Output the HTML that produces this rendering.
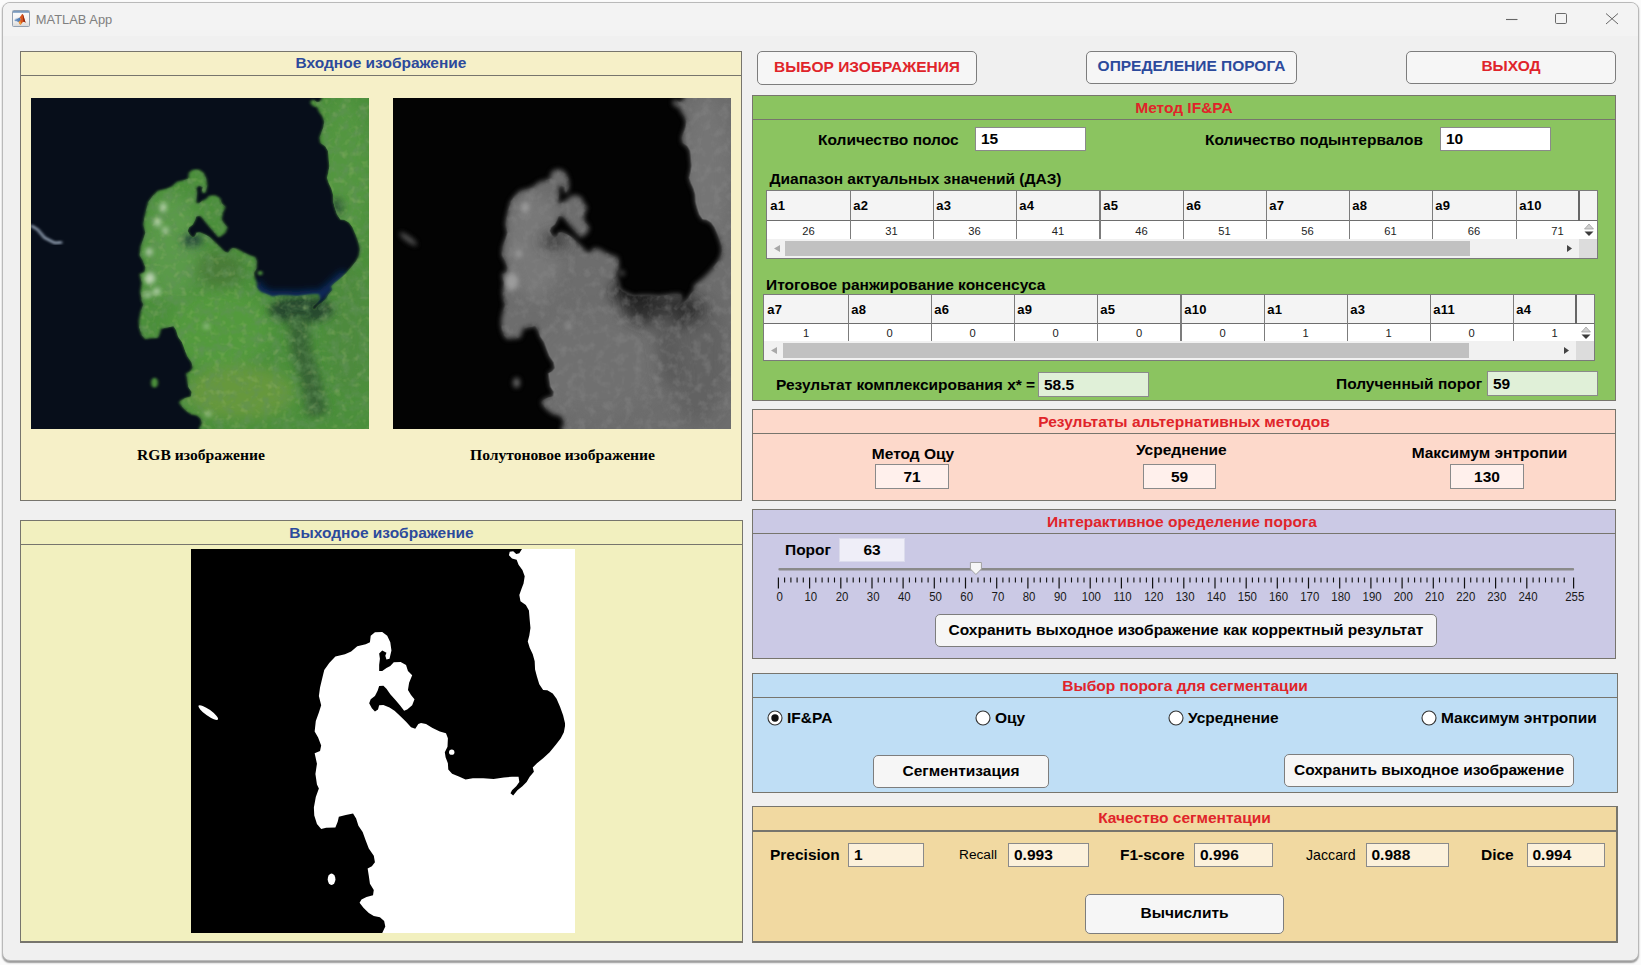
<!DOCTYPE html>
<html lang="ru"><head><meta charset="utf-8"><title>MATLAB App</title>
<style>
*{box-sizing:border-box}
html,body{margin:0;padding:0}
body{width:1641px;height:965px;position:relative;overflow:hidden;background:#fbfbfb;font-family:"Liberation Sans",sans-serif;font-size:15.5px;color:#000}
.abs{position:absolute}
#win{position:absolute;left:2px;top:2px;width:1637px;height:959px;background:#f0f0f0;border:1px solid #b9b9b9;border-radius:8px;box-shadow:0 1.5px 1.5px #9c9c9c}
#tb{position:absolute;left:3px;top:3px;width:1635px;height:33px;background:#f3f3f3;border-radius:7px 7px 0 0}
.panel{position:absolute;border:1px solid #77756d}
.pt{position:absolute;left:0;right:0;top:0;text-align:center;font-weight:bold;white-space:nowrap;border-bottom:1px solid #77756d}
.t{position:absolute;white-space:nowrap;font-weight:bold;line-height:18px}
.n{font-weight:normal}
.btn{position:absolute;border:1px solid #7d7d7d;border-radius:5px;background:#f6f6f6;text-align:center;font-weight:bold;white-space:nowrap}
.ed{position:absolute;border:1px solid #8a8a8a;background:#fff;font-weight:bold;white-space:nowrap;padding-left:6px}
.red{color:#e0242a}.blue{color:#2c4a9c}
</style></head>
<body>
<div id="win"></div><div id="tb"></div>
<svg class="abs" style="left:12px;top:10px" width="18" height="17" viewBox="0 0 18 17">
<defs><linearGradient id="ig" x1="0" y1="0" x2="0" y2="1"><stop offset="0" stop-color="#fdfdfd"/><stop offset=".6" stop-color="#f4f4f4"/><stop offset="1" stop-color="#d8d8d8"/></linearGradient></defs>
<rect x="0.5" y="0.5" width="17" height="16" rx="1" fill="url(#ig)" stroke="#93a0b0"/>
<rect x="1" y="1" width="16" height="1.8" fill="#7b9bbf"/>
<path d="M2.2 10.3 L5.2 8.9 L7.6 7.4 L9 9.6 L6.6 12 Z" fill="#4a78b0"/>
<path d="M2.6 9.6 L6.4 8 M3 11 L6.8 9.8" stroke="#86a8d0" stroke-width=".6"/>
<path d="M6.6 12 L9 9.6 L7.6 7.4 L9.3 5.2 Q10 3.9 10.6 4.1 Q11.2 4.4 12 7.5 L13.6 12.8 Q12.2 11.4 11 12 Q9.8 12.8 9 14.4 Q8.4 14.8 7.8 14.2 Z" fill="#d8561f"/>
<path d="M10.6 4.1 Q11.2 4.4 12 7.5 L13.6 12.8 Q12.4 11.6 11.4 11.9 Q11.3 7 10.6 4.1Z" fill="#8e2712"/>
<path d="M6.6 12 L8.2 11 L9.4 13.6 Q8.6 14.9 7.8 14.2 Z" fill="#f0a63a"/>
</svg>
<div class="abs" style="left:35.8px;top:10.5px;font-size:12.9px;line-height:18px;color:#808080;white-space:nowrap">MATLAB App</div>
<svg class="abs" style="left:1500px;top:8px" width="125" height="22" viewBox="0 0 125 22">
<path d="M6 11.5 H17.5" stroke="#666" stroke-width="1.1" fill="none"/>
<rect x="55.5" y="5.5" width="11" height="10" rx="1.2" fill="none" stroke="#6a6a6a" stroke-width="1"/>
<path d="M106 5.5 L118 16 M118 5.5 L106 16" stroke="#666" stroke-width="1" fill="none"/>
</svg>
<div class="panel" style="left:20px;top:51px;width:722px;height:450px;background:#f6f0c8;"><div class="pt blue" style="height:24px;line-height:22px;">Входное изображение</div></div>
<div class="panel" style="left:20px;top:520px;width:723px;height:423px;background:#f2f0bf;border-bottom-width:2px;"><div class="pt blue" style="height:24px;line-height:23px;">Выходное изображение</div></div>
<svg width="0" height="0" style="position:absolute"><defs><g id="land"><polygon points="862,0 855,11 847,13 839,6 830,7 828,16 836,25 848,28 853,41 863,55 869,71 866,90 861,103 855,120 858,136 872,146 880,160 882,184 884,206 881,225 877,241 882,257 890,274 895,292 896,314 901,333 907,352 917,367 928,368 942,376 952,390 961,411 969,433 974,454 974,461 971,477 963,493 950,510 934,529 917,545 901,558 890,569 893,580 882,593 874,607 863,618 850,628 839,642 832,636 836,628 847,618 855,607 853,593 836,593 815,595 788,599 761,597 734,597 715,600 699,593 680,585 670,574 669,558 663,542 661,529 668,515 669,493 664,480 648,475 629,466 612,456 599,453 592,456 584,468 573,464 560,450 544,434 530,421 517,413 501,406 490,407 487,418 479,423 471,415 464,402 468,391 479,383 486,369 490,357 501,356 509,364 519,378 533,394 544,407 555,421 563,418 576,407 582,391 573,380 565,367 568,348 576,329 565,318 560,302 546,294 528,295 519,305 509,310 498,318 490,318 490,302 492,286 490,272 498,264 509,270 506,278 509,288 517,286 522,264 519,243 511,226 498,216 479,217 468,226 466,243 455,248 433,253 417,267 401,274 376,280 360,297 347,315 341,340 336,361 333,383 339,407 333,426 325,448 322,475 331,491 339,512 336,526 322,532 328,559 324,586 328,613 333,624 325,646 320,673 321,694 328,716 339,729 352,726 376,725 382,710 385,697 403,693 422,689 430,702 436,721 447,737 455,759 463,780 476,799 479,816 471,826 460,832 463,851 466,872 476,888 474,902 457,906 444,913 439,921 449,934 463,948 476,956 492,959 503,969 506,983 498,1000 1000,1000 1000,0"/><circle cx="679" cy="529" r="7"/><ellipse cx="366" cy="860" rx="10" ry="15"/><ellipse cx="45" cy="426" rx="31" ry="8" transform="rotate(36 45 426)"/></g><g id="lande"><polygon points="862,-80 862,0 855,11 847,13 839,6 830,7 828,16 836,25 848,28 853,41 863,55 869,71 866,90 861,103 855,120 858,136 872,146 880,160 882,184 884,206 881,225 877,241 882,257 890,274 895,292 896,314 901,333 907,352 917,367 928,368 942,376 952,390 961,411 969,433 974,454 974,461 971,477 963,493 950,510 934,529 917,545 901,558 890,569 893,580 882,593 874,607 863,618 850,628 839,642 832,636 836,628 847,618 855,607 853,593 836,593 815,595 788,599 761,597 734,597 715,600 699,593 680,585 670,574 669,558 663,542 661,529 668,515 669,493 664,480 648,475 629,466 612,456 599,453 592,456 584,468 573,464 560,450 544,434 530,421 517,413 501,406 490,407 487,418 479,423 471,415 464,402 468,391 479,383 486,369 490,357 501,356 509,364 519,378 533,394 544,407 555,421 563,418 576,407 582,391 573,380 565,367 568,348 576,329 565,318 560,302 546,294 528,295 519,305 509,310 498,318 490,318 490,302 492,286 490,272 498,264 509,270 506,278 509,288 517,286 522,264 519,243 511,226 498,216 479,217 468,226 466,243 455,248 433,253 417,267 401,274 376,280 360,297 347,315 341,340 336,361 333,383 339,407 333,426 325,448 322,475 331,491 339,512 336,526 322,532 328,559 324,586 328,613 333,624 325,646 320,673 321,694 328,716 339,729 352,726 376,725 382,710 385,697 403,693 422,689 430,702 436,721 447,737 455,759 463,780 476,799 479,816 471,826 460,832 463,851 466,872 476,888 474,902 457,906 444,913 439,921 449,934 463,948 476,956 492,959 503,969 506,983 498,1000 498,1080 1080,1080 1080,-80"/><circle cx="679" cy="529" r="7"/><ellipse cx="366" cy="860" rx="10" ry="15"/></g><filter id="b1" x="-10%" y="-10%" width="120%" height="120%"><feGaussianBlur stdDeviation="4"/></filter><filter id="b2" x="-10%" y="-10%" width="120%" height="120%"><feGaussianBlur stdDeviation="8"/></filter><filter id="b3" x="-60%" y="-60%" width="220%" height="220%"><feGaussianBlur stdDeviation="20"/></filter><filter id="b4" x="-60%" y="-60%" width="220%" height="220%"><feGaussianBlur stdDeviation="12"/></filter><filter id="tex" x="0" y="0" width="100%" height="100%"><feTurbulence type="fractalNoise" baseFrequency="0.035" numOctaves="3" seed="7"/><feColorMatrix type="matrix" values="0 0 0 0 0.12  0 0 0 0 0.28  0 0 0 0 0.10  0 0 0 1.5 -0.62"/></filter><filter id="tex2" x="0" y="0" width="100%" height="100%"><feTurbulence type="fractalNoise" baseFrequency="0.05" numOctaves="2" seed="11"/><feColorMatrix type="matrix" values="0 0 0 0 0.55  0 0 0 0 0.62  0 0 0 0 0.25  0 0 0 2.0 -1.05"/></filter><filter id="texg" x="0" y="0" width="100%" height="100%"><feTurbulence type="fractalNoise" baseFrequency="0.035" numOctaves="3" seed="7"/><feColorMatrix type="matrix" values="0 0 0 0 0.25  0 0 0 0 0.25  0 0 0 0 0.25  0 0 0 2.0 -0.9"/></filter><clipPath id="lc"><polygon points="862,-80 862,0 855,11 847,13 839,6 830,7 828,16 836,25 848,28 853,41 863,55 869,71 866,90 861,103 855,120 858,136 872,146 880,160 882,184 884,206 881,225 877,241 882,257 890,274 895,292 896,314 901,333 907,352 917,367 928,368 942,376 952,390 961,411 969,433 974,454 974,461 971,477 963,493 950,510 934,529 917,545 901,558 890,569 893,580 882,593 874,607 863,618 850,628 839,642 832,636 836,628 847,618 855,607 853,593 836,593 815,595 788,599 761,597 734,597 715,600 699,593 680,585 670,574 669,558 663,542 661,529 668,515 669,493 664,480 648,475 629,466 612,456 599,453 592,456 584,468 573,464 560,450 544,434 530,421 517,413 501,406 490,407 487,418 479,423 471,415 464,402 468,391 479,383 486,369 490,357 501,356 509,364 519,378 533,394 544,407 555,421 563,418 576,407 582,391 573,380 565,367 568,348 576,329 565,318 560,302 546,294 528,295 519,305 509,310 498,318 490,318 490,302 492,286 490,272 498,264 509,270 506,278 509,288 517,286 522,264 519,243 511,226 498,216 479,217 468,226 466,243 455,248 433,253 417,267 401,274 376,280 360,297 347,315 341,340 336,361 333,383 339,407 333,426 325,448 322,475 331,491 339,512 336,526 322,532 328,559 324,586 328,613 333,624 325,646 320,673 321,694 328,716 339,729 352,726 376,725 382,710 385,697 403,693 422,689 430,702 436,721 447,737 455,759 463,780 476,799 479,816 471,826 460,832 463,851 466,872 476,888 474,902 457,906 444,913 439,921 449,934 463,948 476,956 492,959 503,969 506,983 498,1000 498,1080 1080,1080 1080,-80"/></clipPath></defs></svg>
<svg class="abs" style="left:31px;top:98px" width="337.5" height="331" viewBox="0 0 1000 1000" preserveAspectRatio="none">
<rect width="1000" height="1000" fill="#070e1a"/>
<g filter="url(#b4)"><path d="M934 529 L917 545 L901 558 L890 569 L855 598 L836 593 L815 595 L788 599 L761 597 L734 597 L715 600 L699 593 L680 585 L670 574 L667 556" stroke="#123a80" stroke-width="26" fill="none" opacity=".75"/></g>

<g filter="url(#b1)"><use href="#lande" fill="#4b8f3a"/></g>
<g clip-path="url(#lc)">
<g filter="url(#b3)">
<ellipse cx="930" cy="230" rx="70" ry="230" fill="#52963f"/>
<ellipse cx="420" cy="450" rx="80" ry="160" fill="#5a9a48"/>
<ellipse cx="560" cy="700" rx="150" ry="120" fill="#529a3c"/>
<ellipse cx="620" cy="890" rx="160" ry="80" fill="#66983c"/>
<ellipse cx="560" cy="520" rx="70" ry="55" fill="#4a7c38"/>
<ellipse cx="940" cy="700" rx="60" ry="200" fill="#4e8a3c"/>
</g>
<g filter="url(#b4)">
<ellipse cx="800" cy="640" rx="95" ry="42" fill="#27492d"/>
<path d="M790 660 L800 760 L830 860 L850 960" stroke="#386534" stroke-width="60" fill="none"/>
<ellipse cx="478" cy="430" rx="30" ry="22" fill="#28483a"/>
<ellipse cx="905" cy="330" rx="18" ry="30" fill="#2c5236"/>
</g>
<rect width="1000" height="1000" filter="url(#tex)"/>
<rect width="1000" height="1000" filter="url(#tex2)" opacity=".3"/>
<g filter="url(#b2)" fill="#d4e4cc" opacity=".8">
<ellipse cx="392" cy="330" rx="9" ry="14"/><ellipse cx="375" cy="375" rx="10" ry="12"/><ellipse cx="398" cy="400" rx="8" ry="10"/>
<ellipse cx="350" cy="465" rx="10" ry="10"/><ellipse cx="352" cy="545" rx="16" ry="18"/><ellipse cx="372" cy="585" rx="12" ry="10"/><ellipse cx="345" cy="595" rx="10" ry="8"/>
<ellipse cx="520" cy="690" rx="9" ry="6"/><ellipse cx="525" cy="955" rx="10" ry="6"/>
</g>
</g>
<g filter="url(#b1)"><path d="M0 385 L20 398 L40 422 L70 438 L92 436" stroke="#8e9cae" stroke-width="8" fill="none"/></g>
</svg>
<svg class="abs" style="left:393px;top:98px" width="337.5" height="331" viewBox="0 0 1000 1000" preserveAspectRatio="none">
<rect width="1000" height="1000" fill="#030303"/>
<g filter="url(#b2)"><use href="#lande" fill="#6d6d6d"/><g fill="#5a5a5a"><ellipse cx="45" cy="426" rx="31" ry="8" transform="rotate(36 45 426)"/></g></g>
<g clip-path="url(#lc)">
<g filter="url(#b3)">
<ellipse cx="930" cy="230" rx="70" ry="230" fill="#747474"/>
<ellipse cx="420" cy="450" rx="80" ry="160" fill="#787878"/>
<ellipse cx="600" cy="800" rx="200" ry="160" fill="#707070"/>
<ellipse cx="900" cy="780" rx="90" ry="200" fill="#626262"/>
</g>
<g filter="url(#b3)">
<ellipse cx="800" cy="640" rx="120" ry="50" fill="#2e2e2e"/>
<ellipse cx="710" cy="585" rx="60" ry="40" fill="#1c1c1c"/>
<ellipse cx="830" cy="660" rx="50" ry="40" fill="#303030"/>
<path d="M800 660 L830 860" stroke="#5a5a5a" stroke-width="60" fill="none"/>
<ellipse cx="478" cy="432" rx="38" ry="28" fill="#3c3c3c"/>
</g>
<rect width="1000" height="1000" filter="url(#texg)" opacity=".55"/>
<g filter="url(#b2)" fill="#9c9c9c">
<ellipse cx="392" cy="330" rx="12" ry="16"/><ellipse cx="352" cy="555" rx="20" ry="26"/><ellipse cx="372" cy="470" rx="10" ry="12"/><ellipse cx="520" cy="690" rx="9" ry="7"/>
</g>
</g>
</svg>
<div class="t" style="left:1px;width:400px;text-align:center;top:445.6px;font-family:'Liberation Serif',serif;font-size:15.6px">RGB изображение</div>
<div class="t" style="left:362.5px;width:400px;text-align:center;top:445.6px;font-family:'Liberation Serif',serif;font-size:15.6px">Полутоновое изображение</div>
<svg class="abs" style="left:191px;top:549px" width="384" height="384" viewBox="0 0 1000 1000" preserveAspectRatio="none" shape-rendering="auto">
<rect width="1000" height="1000" fill="#000"/><use href="#land" fill="#fff"/></svg>
<div class="btn red" style="left:757px;top:51px;width:220px;height:34px;line-height:32px;line-height:30px">ВЫБОР ИЗОБРАЖЕНИЯ</div>
<div class="btn blue" style="left:1086px;top:51px;width:211px;height:33px;line-height:31px;line-height:28px">ОПРЕДЕЛЕНИЕ ПОРОГА</div>
<div class="btn red" style="left:1406px;top:51px;width:210px;height:33px;line-height:31px;line-height:27px">ВЫХОД</div>
<div class="panel" style="left:752px;top:95px;width:864px;height:306px;background:#8bc460;"><div class="pt red" style="height:24px;line-height:24px;">Метод IF&amp;PA</div></div>
<div class="panel" style="left:752px;top:409px;width:864px;height:92px;background:#fdd9cb;"><div class="pt red" style="height:24px;line-height:24px;">Результаты альтернативных методов</div></div>
<div class="panel" style="left:752px;top:509px;width:864px;height:150px;background:#cbc9e5;"><div class="pt red" style="height:24px;line-height:24px;padding-right:4px">Интерактивное оределение порога</div></div>
<div class="panel" style="left:752px;top:673px;width:866px;height:120px;background:#bfdef5;"><div class="pt red" style="height:24px;line-height:24px;">Выбор порога для сегментации</div></div>
<div class="panel" style="left:752px;top:806px;width:866px;height:137px;background:#f1d9a1;border-right-width:2px;border-bottom-width:2px;"><div class="pt red" style="height:25px;line-height:22px;border-bottom-width:2px;">Качество сегментации</div></div>
<div class="t " style="left:818px;top:131px;">Количество полос</div>
<div class="ed" style="left:975px;top:127px;width:111px;height:24px;line-height:22px;background:#fff;padding-left:5px">15</div>
<div class="t " style="left:1205px;top:131px;">Количество подынтервалов</div>
<div class="ed" style="left:1440px;top:127px;width:111px;height:24px;line-height:22px;background:#fff;padding-left:5px">10</div>
<div class="t " style="left:769.5px;top:170px;">Диапазон актуальных значений (ДАЗ)</div>
<div class="t " style="left:766px;top:276px;">Итоговое ранжирование консенсуса</div>
<div class="abs" style="left:766px;top:190px;width:832px;height:69px;border:1px solid #7a7a7a;background:#f1f1f1;overflow:hidden"><div class="abs" style="left:0;top:0;width:830px;height:30px;background:#f4f4f4;border-bottom:1px solid #6e6e6e"></div><div class="abs" style="left:0;top:30px;width:830px;height:19px;background:#fff"></div><div class="abs" style="left:3.2px;top:6px;font:bold 13px/18px 'Liberation Sans',sans-serif;letter-spacing:.3px">a1</div><div class="abs" style="left:0px;width:83px;text-align:center;top:30px;font:11.2px/20.6px 'Liberation Sans',sans-serif;color:#222">26</div><div class="abs" style="left:83px;top:0;width:1px;height:48px;background:#7c7c7c"></div><div class="abs" style="left:86.2px;top:6px;font:bold 13px/18px 'Liberation Sans',sans-serif;letter-spacing:.3px">a2</div><div class="abs" style="left:83px;width:83px;text-align:center;top:30px;font:11.2px/20.6px 'Liberation Sans',sans-serif;color:#222">31</div><div class="abs" style="left:166px;top:0;width:1px;height:48px;background:#7c7c7c"></div><div class="abs" style="left:169.2px;top:6px;font:bold 13px/18px 'Liberation Sans',sans-serif;letter-spacing:.3px">a3</div><div class="abs" style="left:166px;width:83px;text-align:center;top:30px;font:11.2px/20.6px 'Liberation Sans',sans-serif;color:#222">36</div><div class="abs" style="left:249px;top:0;width:1px;height:48px;background:#7c7c7c"></div><div class="abs" style="left:252.2px;top:6px;font:bold 13px/18px 'Liberation Sans',sans-serif;letter-spacing:.3px">a4</div><div class="abs" style="left:249px;width:84px;text-align:center;top:30px;font:11.2px/20.6px 'Liberation Sans',sans-serif;color:#222">41</div><div class="abs" style="left:332px;top:0;width:2px;height:48px;background:#7c7c7c"></div><div class="abs" style="left:336.2px;top:6px;font:bold 13px/18px 'Liberation Sans',sans-serif;letter-spacing:.3px">a5</div><div class="abs" style="left:333px;width:83px;text-align:center;top:30px;font:11.2px/20.6px 'Liberation Sans',sans-serif;color:#222">46</div><div class="abs" style="left:416px;top:0;width:1px;height:48px;background:#7c7c7c"></div><div class="abs" style="left:419.2px;top:6px;font:bold 13px/18px 'Liberation Sans',sans-serif;letter-spacing:.3px">a6</div><div class="abs" style="left:416px;width:83px;text-align:center;top:30px;font:11.2px/20.6px 'Liberation Sans',sans-serif;color:#222">51</div><div class="abs" style="left:499px;top:0;width:1px;height:48px;background:#7c7c7c"></div><div class="abs" style="left:502.2px;top:6px;font:bold 13px/18px 'Liberation Sans',sans-serif;letter-spacing:.3px">a7</div><div class="abs" style="left:499px;width:83px;text-align:center;top:30px;font:11.2px/20.6px 'Liberation Sans',sans-serif;color:#222">56</div><div class="abs" style="left:582px;top:0;width:1px;height:48px;background:#7c7c7c"></div><div class="abs" style="left:585.2px;top:6px;font:bold 13px/18px 'Liberation Sans',sans-serif;letter-spacing:.3px">a8</div><div class="abs" style="left:582px;width:83px;text-align:center;top:30px;font:11.2px/20.6px 'Liberation Sans',sans-serif;color:#222">61</div><div class="abs" style="left:665px;top:0;width:1px;height:48px;background:#7c7c7c"></div><div class="abs" style="left:668.2px;top:6px;font:bold 13px/18px 'Liberation Sans',sans-serif;letter-spacing:.3px">a9</div><div class="abs" style="left:665px;width:84px;text-align:center;top:30px;font:11.2px/20.6px 'Liberation Sans',sans-serif;color:#222">66</div><div class="abs" style="left:749px;top:0;width:1px;height:48px;background:#7c7c7c"></div><div class="abs" style="left:752.2px;top:6px;font:bold 13px/18px 'Liberation Sans',sans-serif;letter-spacing:.3px">a10</div><div class="abs" style="left:749px;width:83px;text-align:center;top:30px;font:11.2px/20.6px 'Liberation Sans',sans-serif;color:#222">71</div><div class="abs" style="left:811px;top:0;width:2px;height:30px;background:#666"></div><svg class="abs" style="left:816px;top:32px" width="12" height="14" viewBox="0 0 12 14"><path d="M1.5 6 L6 1 L10.5 6Z" fill="#d0d0d0" stroke="#9a9a9a" stroke-width=".7"/><path d="M1.5 8.5 L6 13 L10.5 8.5Z" fill="#3c3c3c"/></svg><div class="abs" style="left:0;top:48px;width:830px;height:19px;background:#f1f1f1"></div><div class="abs" style="left:812px;top:48px;width:18px;height:19px;background:#dcdcdc"></div><div class="abs" style="left:17.8px;top:50px;width:685.6px;height:15px;background:#c1c1c1"></div><svg class="abs" style="left:6.5px;top:54.0px" width="6" height="7" viewBox="0 0 6 7"><path d="M6 0 L0 3.5 L6 7Z" fill="#a8a8a8"/></svg><svg class="abs" style="left:799.5px;top:54.0px" width="5" height="7" viewBox="0 0 5 7"><path d="M0 0 L5 3.5 L0 7Z" fill="#444"/></svg></div>
<div class="abs" style="left:763px;top:294px;width:832px;height:67px;border:1px solid #7a7a7a;background:#f1f1f1;overflow:hidden"><div class="abs" style="left:0;top:0;width:830px;height:29px;background:#f4f4f4;border-bottom:1px solid #6e6e6e"></div><div class="abs" style="left:0;top:29px;width:830px;height:18px;background:#fff"></div><div class="abs" style="left:3.2px;top:6px;font:bold 13px/18px 'Liberation Sans',sans-serif;letter-spacing:.3px">a7</div><div class="abs" style="left:0px;width:84px;text-align:center;top:29px;font:11.2px/19.6px 'Liberation Sans',sans-serif;color:#222">1</div><div class="abs" style="left:84px;top:0;width:1px;height:46px;background:#7c7c7c"></div><div class="abs" style="left:87.2px;top:6px;font:bold 13px/18px 'Liberation Sans',sans-serif;letter-spacing:.3px">a8</div><div class="abs" style="left:84px;width:83px;text-align:center;top:29px;font:11.2px/19.6px 'Liberation Sans',sans-serif;color:#222">0</div><div class="abs" style="left:167px;top:0;width:1px;height:46px;background:#7c7c7c"></div><div class="abs" style="left:170.2px;top:6px;font:bold 13px/18px 'Liberation Sans',sans-serif;letter-spacing:.3px">a6</div><div class="abs" style="left:167px;width:83px;text-align:center;top:29px;font:11.2px/19.6px 'Liberation Sans',sans-serif;color:#222">0</div><div class="abs" style="left:250px;top:0;width:1px;height:46px;background:#7c7c7c"></div><div class="abs" style="left:253.2px;top:6px;font:bold 13px/18px 'Liberation Sans',sans-serif;letter-spacing:.3px">a9</div><div class="abs" style="left:250px;width:83px;text-align:center;top:29px;font:11.2px/19.6px 'Liberation Sans',sans-serif;color:#222">0</div><div class="abs" style="left:333px;top:0;width:1px;height:46px;background:#7c7c7c"></div><div class="abs" style="left:336.2px;top:6px;font:bold 13px/18px 'Liberation Sans',sans-serif;letter-spacing:.3px">a5</div><div class="abs" style="left:333px;width:84px;text-align:center;top:29px;font:11.2px/19.6px 'Liberation Sans',sans-serif;color:#222">0</div><div class="abs" style="left:416px;top:0;width:2px;height:46px;background:#7c7c7c"></div><div class="abs" style="left:420.2px;top:6px;font:bold 13px/18px 'Liberation Sans',sans-serif;letter-spacing:.3px">a10</div><div class="abs" style="left:417px;width:83px;text-align:center;top:29px;font:11.2px/19.6px 'Liberation Sans',sans-serif;color:#222">0</div><div class="abs" style="left:500px;top:0;width:1px;height:46px;background:#7c7c7c"></div><div class="abs" style="left:503.2px;top:6px;font:bold 13px/18px 'Liberation Sans',sans-serif;letter-spacing:.3px">a1</div><div class="abs" style="left:500px;width:83px;text-align:center;top:29px;font:11.2px/19.6px 'Liberation Sans',sans-serif;color:#222">1</div><div class="abs" style="left:583px;top:0;width:1px;height:46px;background:#7c7c7c"></div><div class="abs" style="left:586.2px;top:6px;font:bold 13px/18px 'Liberation Sans',sans-serif;letter-spacing:.3px">a3</div><div class="abs" style="left:583px;width:83px;text-align:center;top:29px;font:11.2px/19.6px 'Liberation Sans',sans-serif;color:#222">1</div><div class="abs" style="left:666px;top:0;width:1px;height:46px;background:#7c7c7c"></div><div class="abs" style="left:669.2px;top:6px;font:bold 13px/18px 'Liberation Sans',sans-serif;letter-spacing:.3px">a11</div><div class="abs" style="left:666px;width:83px;text-align:center;top:29px;font:11.2px/19.6px 'Liberation Sans',sans-serif;color:#222">0</div><div class="abs" style="left:749px;top:0;width:1px;height:46px;background:#7c7c7c"></div><div class="abs" style="left:752.2px;top:6px;font:bold 13px/18px 'Liberation Sans',sans-serif;letter-spacing:.3px">a4</div><div class="abs" style="left:749px;width:83px;text-align:center;top:29px;font:11.2px/19.6px 'Liberation Sans',sans-serif;color:#222">1</div><div class="abs" style="left:811px;top:0;width:2px;height:29px;background:#666"></div><svg class="abs" style="left:816px;top:31px" width="12" height="14" viewBox="0 0 12 14"><path d="M1.5 6 L6 1 L10.5 6Z" fill="#d0d0d0" stroke="#9a9a9a" stroke-width=".7"/><path d="M1.5 8.5 L6 13 L10.5 8.5Z" fill="#3c3c3c"/></svg><div class="abs" style="left:0;top:46px;width:830px;height:19px;background:#f1f1f1"></div><div class="abs" style="left:812px;top:46px;width:18px;height:19px;background:#dcdcdc"></div><div class="abs" style="left:19.1px;top:48px;width:685.5px;height:15px;background:#c1c1c1"></div><svg class="abs" style="left:6.5px;top:52.0px" width="6" height="7" viewBox="0 0 6 7"><path d="M6 0 L0 3.5 L6 7Z" fill="#a8a8a8"/></svg><svg class="abs" style="left:799.5px;top:52.0px" width="5" height="7" viewBox="0 0 5 7"><path d="M0 0 L5 3.5 L0 7Z" fill="#444"/></svg></div>
<div class="t " style="left:776px;top:376px;">Результат комплексирования x* =</div>
<div class="ed" style="left:1038px;top:372px;width:111px;height:25px;line-height:23px;background:#e0f0d8;padding-left:5px">58.5</div>
<div class="t " style="left:1336px;top:375px;">Полученный порог</div>
<div class="ed" style="left:1487px;top:371px;width:111px;height:25px;line-height:23px;background:#e0f0d8;padding-left:5px">59</div>
<div class="t " style="left:613px;width:600px;text-align:center;top:445px;">Метод Оцу</div>
<div class="t " style="left:881.3px;width:600px;text-align:center;top:441px;">Усреднение</div>
<div class="t " style="left:1189.5px;width:600px;text-align:center;top:444px;">Максимум энтропии</div>
<div class="ed" style="left:875px;top:464px;width:74px;height:25px;line-height:23px;background:#fff0ec;padding-left:0;text-align:center">71</div>
<div class="ed" style="left:1143px;top:464px;width:73px;height:25px;line-height:23px;background:#fff0ec;padding-left:0;text-align:center">59</div>
<div class="ed" style="left:1450px;top:464px;width:74px;height:25px;line-height:23px;background:#fff0ec;padding-left:0;text-align:center">130</div>
<div class="t " style="left:785px;top:541px;">Порог</div>
<div class="ed" style="left:839px;top:538px;width:66px;height:24px;line-height:22px;background:#efeef8;padding-left:0;text-align:center;border-color:#dcdcec">63</div>
<svg class="abs" style="left:760px;top:556px" width="850" height="55" viewBox="0 0 850 55" font-family="Liberation Sans, sans-serif" font-size="13" fill="#1a1a1a"><rect x="18.4" y="12" width="795.7" height="2.6" rx="1" fill="#8a8a8a"/><path d="M18.4 21.5V32.5M49.6 21.5V32.5M80.8 21.5V32.5M112.0 21.5V32.5M143.1 21.5V32.5M174.3 21.5V32.5M205.5 21.5V32.5M236.7 21.5V32.5M267.9 21.5V32.5M299.1 21.5V32.5M330.2 21.5V32.5M361.4 21.5V32.5M392.6 21.5V32.5M423.8 21.5V32.5M455.0 21.5V32.5M486.2 21.5V32.5M517.3 21.5V32.5M548.5 21.5V32.5M579.7 21.5V32.5M610.9 21.5V32.5M642.1 21.5V32.5M673.3 21.5V32.5M704.5 21.5V32.5M735.6 21.5V32.5M766.8 21.5V32.5M813.6 21.5V32.5" stroke="#111" stroke-width="1.2" fill="none"/><path d="M24.6 21.5V26.5M30.9 21.5V26.5M37.1 21.5V26.5M43.3 21.5V26.5M55.8 21.5V26.5M62.1 21.5V26.5M68.3 21.5V26.5M74.5 21.5V26.5M87.0 21.5V26.5M93.2 21.5V26.5M99.5 21.5V26.5M105.7 21.5V26.5M118.2 21.5V26.5M124.4 21.5V26.5M130.7 21.5V26.5M136.9 21.5V26.5M149.4 21.5V26.5M155.6 21.5V26.5M161.8 21.5V26.5M168.1 21.5V26.5M180.6 21.5V26.5M186.8 21.5V26.5M193.0 21.5V26.5M199.3 21.5V26.5M211.7 21.5V26.5M218.0 21.5V26.5M224.2 21.5V26.5M230.5 21.5V26.5M242.9 21.5V26.5M249.2 21.5V26.5M255.4 21.5V26.5M261.6 21.5V26.5M274.1 21.5V26.5M280.3 21.5V26.5M286.6 21.5V26.5M292.8 21.5V26.5M305.3 21.5V26.5M311.5 21.5V26.5M317.8 21.5V26.5M324.0 21.5V26.5M336.5 21.5V26.5M342.7 21.5V26.5M349.0 21.5V26.5M355.2 21.5V26.5M367.7 21.5V26.5M373.9 21.5V26.5M380.1 21.5V26.5M386.4 21.5V26.5M398.8 21.5V26.5M405.1 21.5V26.5M411.3 21.5V26.5M417.6 21.5V26.5M430.0 21.5V26.5M436.3 21.5V26.5M442.5 21.5V26.5M448.7 21.5V26.5M461.2 21.5V26.5M467.5 21.5V26.5M473.7 21.5V26.5M479.9 21.5V26.5M492.4 21.5V26.5M498.6 21.5V26.5M504.9 21.5V26.5M511.1 21.5V26.5M523.6 21.5V26.5M529.8 21.5V26.5M536.1 21.5V26.5M542.3 21.5V26.5M554.8 21.5V26.5M561.0 21.5V26.5M567.2 21.5V26.5M573.5 21.5V26.5M586.0 21.5V26.5M592.2 21.5V26.5M598.4 21.5V26.5M604.7 21.5V26.5M617.1 21.5V26.5M623.4 21.5V26.5M629.6 21.5V26.5M635.8 21.5V26.5M648.3 21.5V26.5M654.6 21.5V26.5M660.8 21.5V26.5M667.0 21.5V26.5M679.5 21.5V26.5M685.7 21.5V26.5M692.0 21.5V26.5M698.2 21.5V26.5M710.7 21.5V26.5M716.9 21.5V26.5M723.2 21.5V26.5M729.4 21.5V26.5M741.9 21.5V26.5M748.1 21.5V26.5M754.3 21.5V26.5M760.6 21.5V26.5M773.1 21.5V26.5M779.3 21.5V26.5M785.5 21.5V26.5M791.8 21.5V26.5M798.0 21.5V26.5M804.2 21.5V26.5" stroke="#111" stroke-width="1.1" fill="none"/><text transform="translate(19.6 45) scale(.88 1)" text-anchor="middle">0</text><text transform="translate(50.8 45) scale(.88 1)" text-anchor="middle">10</text><text transform="translate(82.0 45) scale(.88 1)" text-anchor="middle">20</text><text transform="translate(113.2 45) scale(.88 1)" text-anchor="middle">30</text><text transform="translate(144.3 45) scale(.88 1)" text-anchor="middle">40</text><text transform="translate(175.5 45) scale(.88 1)" text-anchor="middle">50</text><text transform="translate(206.7 45) scale(.88 1)" text-anchor="middle">60</text><text transform="translate(237.9 45) scale(.88 1)" text-anchor="middle">70</text><text transform="translate(269.1 45) scale(.88 1)" text-anchor="middle">80</text><text transform="translate(300.3 45) scale(.88 1)" text-anchor="middle">90</text><text transform="translate(331.4 45) scale(.88 1)" text-anchor="middle">100</text><text transform="translate(362.6 45) scale(.88 1)" text-anchor="middle">110</text><text transform="translate(393.8 45) scale(.88 1)" text-anchor="middle">120</text><text transform="translate(425.0 45) scale(.88 1)" text-anchor="middle">130</text><text transform="translate(456.2 45) scale(.88 1)" text-anchor="middle">140</text><text transform="translate(487.4 45) scale(.88 1)" text-anchor="middle">150</text><text transform="translate(518.5 45) scale(.88 1)" text-anchor="middle">160</text><text transform="translate(549.7 45) scale(.88 1)" text-anchor="middle">170</text><text transform="translate(580.9 45) scale(.88 1)" text-anchor="middle">180</text><text transform="translate(612.1 45) scale(.88 1)" text-anchor="middle">190</text><text transform="translate(643.3 45) scale(.88 1)" text-anchor="middle">200</text><text transform="translate(674.5 45) scale(.88 1)" text-anchor="middle">210</text><text transform="translate(705.7 45) scale(.88 1)" text-anchor="middle">220</text><text transform="translate(736.8 45) scale(.88 1)" text-anchor="middle">230</text><text transform="translate(768.0 45) scale(.88 1)" text-anchor="middle">240</text><text transform="translate(814.8 45) scale(.88 1)" text-anchor="middle">255</text><path d="M210.4 6.5 H221.4 V13 L215.9 18.5 L210.4 13Z" fill="#f6f6f6" stroke="#a0a0a0" stroke-width="1"/></svg>
<div class="btn " style="left:935px;top:614px;width:502px;height:33px;line-height:31px;line-height:29px">Сохранить выходное изображение как корректный результат</div>
<svg class="abs" style="left:767.2px;top:710px" width="16" height="16" viewBox="0 0 16 16"><circle cx="8" cy="8" r="7" fill="#fff" stroke="#333" stroke-width="1.1"/><circle cx="8" cy="8" r="3.7" fill="#111"/></svg>
<div class="t " style="left:787px;top:709px;">IF&amp;PA</div>
<svg class="abs" style="left:975.2px;top:710px" width="16" height="16" viewBox="0 0 16 16"><circle cx="8" cy="8" r="7" fill="#fff" stroke="#333" stroke-width="1.1"/></svg>
<div class="t " style="left:995px;top:709px;">Оцу</div>
<svg class="abs" style="left:1168.2px;top:710px" width="16" height="16" viewBox="0 0 16 16"><circle cx="8" cy="8" r="7" fill="#fff" stroke="#333" stroke-width="1.1"/></svg>
<div class="t " style="left:1188px;top:709px;">Усреднение</div>
<svg class="abs" style="left:1421.2px;top:710px" width="16" height="16" viewBox="0 0 16 16"><circle cx="8" cy="8" r="7" fill="#fff" stroke="#333" stroke-width="1.1"/></svg>
<div class="t " style="left:1441px;top:709px;">Максимум энтропии</div>
<div class="btn " style="left:873px;top:755px;width:176px;height:33px;line-height:31px;line-height:29px">Сегментизация</div>
<div class="btn " style="left:1284px;top:754px;width:290px;height:33px;line-height:31px;line-height:29px">Сохранить выходное изображение</div>
<div class="t " style="left:770px;top:846px;">Precision</div>
<div class="ed" style="left:848px;top:843px;width:76px;height:24px;line-height:22px;background:#fcf1dc;padding-left:5px">1</div>
<div class="t n" style="left:959px;top:846px;font-size:13.7px">Recall</div>
<div class="ed" style="left:1008px;top:843px;width:81px;height:24px;line-height:22px;background:#fcf1dc;padding-left:5px">0.993</div>
<div class="t " style="left:1120px;top:846px;">F1-score</div>
<div class="ed" style="left:1194px;top:843px;width:79px;height:24px;line-height:22px;background:#fcf1dc;padding-left:5px">0.996</div>
<div class="t n" style="left:1306px;top:846px;font-size:14.2px">Jaccard</div>
<div class="ed" style="left:1366px;top:843px;width:83px;height:24px;line-height:22px;background:#fcf1dc;padding-left:4.5px">0.988</div>
<div class="t " style="left:1481px;top:846px;">Dice</div>
<div class="ed" style="left:1527px;top:843px;width:78px;height:24px;line-height:22px;background:#fcf1dc;padding-left:4.5px">0.994</div>
<div class="btn " style="left:1085px;top:894px;width:199px;height:40px;line-height:38px;line-height:36px">Вычислить</div>
</body></html>
